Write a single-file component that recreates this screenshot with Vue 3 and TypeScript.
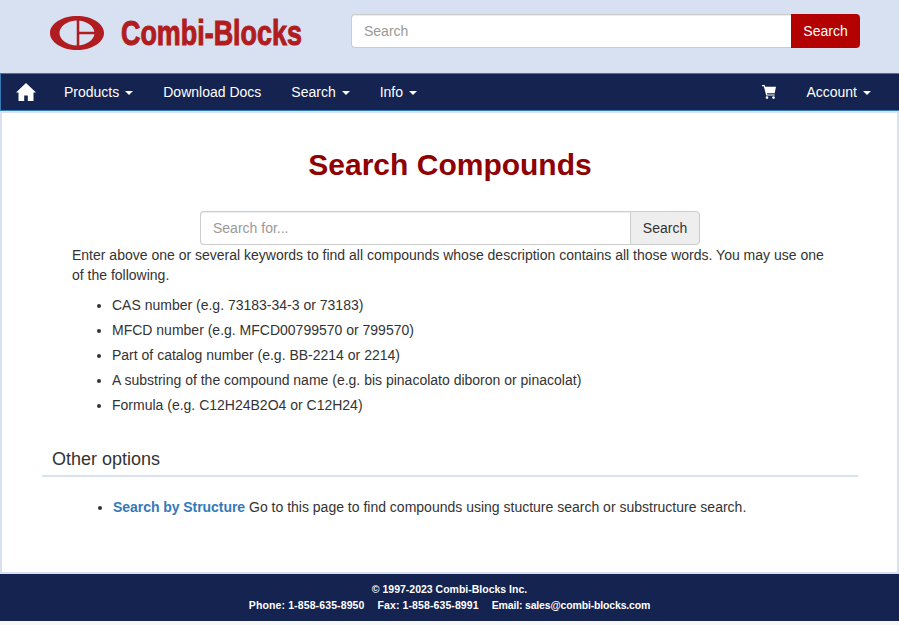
<template>
  <div class="page">
    <header class="top">
      <div class="brand">
        <svg class="mark" width="54" height="34" viewBox="0 0 54 34">
          <path
            fill-rule="evenodd"
            fill="#b11c20"
            d="M27 0C42 0 54 7.6 54 17S42 34 27 34 0 26.4 0 17 12 0 27 0zM27 4.5C17.5 4.500 9.500 10.100 9.500 17S17.500 29.500 27 29.500 44.500 23.900 44.500 17 36.500 4.500 27 4.500z"
          />
          <path d="M28 2v30M28 17h18" stroke="#b11c20" stroke-width="2.5" fill="none" />
        </svg>
        <span class="brand-name">Combi-Blocks</span>
      </div>
      <form class="top-search" @submit.prevent>
        <input class="top-input" type="text" placeholder="Search" />
        <button class="top-btn" type="submit">Search</button>
      </form>
    </header>

    <nav class="navbar">
      <a class="home" href="#" aria-label="Home">
        <svg width="20" height="18" viewBox="0 0 20 18">
          <path d="M10 0 0 9.5h2.500V18h5.700v-5.500h3.600V18h5.700V9.500H20z" fill="#fff" />
        </svg>
      </a>
      <a v-for="item in leftItems" :key="item.label" class="nav-link" href="#">
        {{ item.label }}<span v-if="item.caret" class="caret"></span>
      </a>
      <div class="nav-right">
        <a class="cart" href="#" aria-label="Cart">
          <svg width="14" height="14" viewBox="0 0 14 14">
            <path d="M0 0h2.600l.7 1.800H14l-1.300 6.400H5l.3 1.200h7.400v1.200H4.200L1.800 1.200H0z" fill="#fff" />
            <circle cx="5" cy="12.600" r="1.300" fill="#fff" />
            <circle cx="11.500" cy="12.600" r="1.300" fill="#fff" />
          </svg>
        </a>
        <a class="nav-link" href="#">Account<span class="caret"></span></a>
      </div>
    </nav>

    <main class="content">
      <h1>Search Compounds</h1>
      <form class="main-search" @submit.prevent>
        <input class="main-input" type="text" placeholder="Search for..." />
        <button class="main-btn" type="submit">Search</button>
      </form>
      <p class="intro">
        Enter above one or several keywords to find all compounds whose description contains all those words. You may use one of the following.
      </p>
      <ul class="hints">
        <li v-for="hint in hints" :key="hint">{{ hint }}</li>
      </ul>
      <h2>Other options</h2>
      <ul class="options">
        <li><a href="#">Search by Structure</a> Go to this page to find compounds using stucture search or substructure search.</li>
      </ul>
    </main>

    <footer class="footer">
      <div>© 1997-2023 Combi-Blocks Inc.</div>
      <div class="contact">
        <span class="phone">Phone: 1-858-635-8950</span>
        <span class="fax">Fax: 1-858-635-8991</span>
        <span class="email">Email: sales@combi-blocks.com</span>
      </div>
    </footer>
  </div>
</template>

<script setup lang="ts">
interface NavItem {
  label: string
  caret: boolean
}

const leftItems: NavItem[] = [
  { label: 'Products', caret: true },
  { label: 'Download Docs', caret: false },
  { label: 'Search', caret: true },
  { label: 'Info', caret: true }
]

const hints: string[] = [
  'CAS number (e.g. 73183-34-3 or 73183)',
  'MFCD number (e.g. MFCD00799570 or 799570)',
  'Part of catalog number (e.g. BB-2214 or 2214)',
  'A substring of the compound name (e.g. bis pinacolato diboron or pinacolat)',
  'Formula (e.g. C12H24B2O4 or C12H24)'
]
</script>

<style>
html,
body {
  background: #f8f8f8;
}
</style>

<style scoped>
.page {
  font-family: "Liberation Sans", Arial, sans-serif;
  font-size: 14px;
  line-height: 20px;
  color: #333;
}

.top {
  display: flex;
  height: 73px;
  background: #d8e1f1;
}

.brand {
  display: flex;
  align-items: center;
  width: 351px;
  height: 66px;
  padding-left: 50px;
  box-sizing: border-box;
}

.mark {
  flex: none;
}

.brand-name {
  margin-left: 17px;
  font-size: 34.5px;
  line-height: 40px;
  font-weight: 700;
  color: #b11c20;
  white-space: nowrap;
  transform: scaleX(0.78);
  transform-origin: left center;
  -webkit-text-stroke: 1px #b11c20;
}

.top-search {
  display: flex;
  width: 509px;
  height: 34px;
  margin-top: 14px;
}

.top-input,
.main-input {
  flex: 1;
  min-width: 0;
  box-sizing: border-box;
  padding: 6px 12px;
  font: inherit;
  color: #555;
  background: #fff;
  border: 1px solid #ccc;
  border-right: 0;
  border-radius: 4px 0 0 4px;
  box-shadow: inset 0 1px 1px rgba(0, 0, 0, 0.075);
  outline: none;
}

.top-input::placeholder,
.main-input::placeholder {
  color: #999;
}

.top-btn {
  width: 69px;
  padding: 0;
  font: inherit;
  color: #fff;
  background: #b30000;
  border: 0;
  border-radius: 0 4px 4px 0;
}

.navbar {
  display: flex;
  align-items: center;
  height: 38px;
  box-sizing: border-box;
  background: #14234f;
  border: 1px solid #337ab7;
  border-width: 1px 0 1px 1px;
}

.home {
  display: flex;
  width: 48px;
  padding-left: 15px;
  box-sizing: border-box;
}

.nav-link {
  padding: 0 15px;
  color: #fff;
  line-height: 36px;
  text-decoration: none;
  white-space: nowrap;
}

.caret {
  display: inline-block;
  margin-left: 6px;
  vertical-align: middle;
  border-top: 4px solid #fff;
  border-left: 4px solid transparent;
  border-right: 4px solid transparent;
}

.nav-right {
  display: flex;
  align-items: center;
  margin-left: auto;
  padding-right: 13px;
}

.cart {
  display: flex;
  margin-right: 15px;
}

.content {
  box-sizing: border-box;
  height: 463px;
  padding: 0 39px 0 40px;
  background: #fff;
  border: 2px solid #d8e1f1;
}

h1 {
  margin: 0;
  padding-top: 35px;
  font-size: 30px;
  line-height: 33px;
  font-weight: 700;
  color: #8f0000;
  text-align: center;
}

.main-search {
  display: flex;
  width: 500px;
  height: 34px;
  margin: 30px auto 0;
}

.main-btn {
  width: 70px;
  padding: 0;
  font: inherit;
  color: #333;
  background: #eee;
  border: 1px solid #ccc;
  border-radius: 0 4px 4px 0;
}

.intro {
  margin: 0 30px;
}

.hints {
  margin: 8px 0 0;
  padding: 0 70px;
}

.hints li {
  line-height: 25px;
}

h2 {
  margin: 28px 0 0;
  padding: 0 10px 3px;
  font-size: 18px;
  line-height: 26px;
  font-weight: 400;
  border-bottom: 2px solid #d8e1f1;
}

.options {
  margin: 20px 0 0;
  padding: 0 71px;
}

.options a {
  color: #337ab7;
  font-weight: 700;
  text-decoration: none;
  letter-spacing: -0.05px;
}

.footer {
  box-sizing: border-box;
  height: 47px;
  padding-top: 7px;
  background: #14234f;
  color: #fff;
  font-size: 10.5px;
  line-height: 17px;
  font-weight: 700;
  text-align: center;
}

.contact {
  display: flex;
  justify-content: center;
  gap: 13px;
  margin-top: -1px;
}

.phone {
  letter-spacing: 0.12px;
}

.fax {
  letter-spacing: 0.1px;
}

.email {
  letter-spacing: -0.16px;
}
</style>
